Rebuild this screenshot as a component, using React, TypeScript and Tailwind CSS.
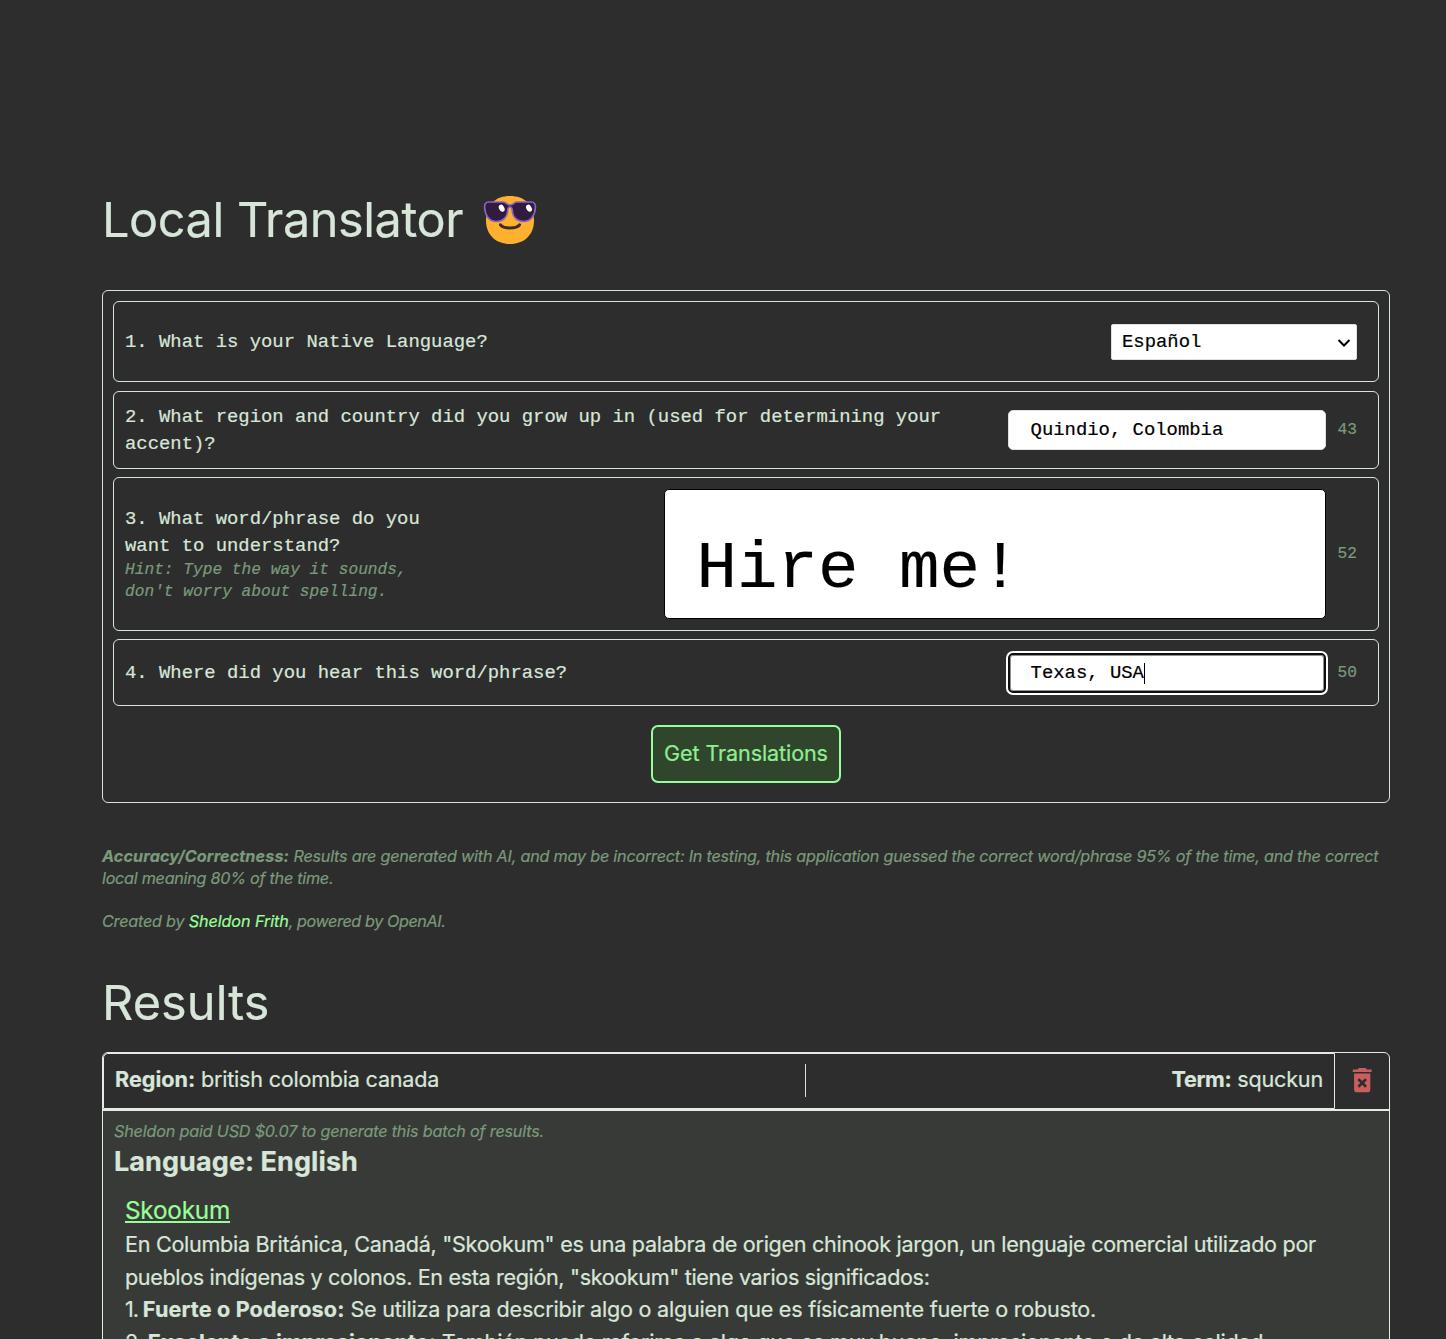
import type { ReactNode } from 'react';
import { MdDeleteForever } from 'react-icons/md';

function SunglassesFace() {
  return (
    <svg width="54" height="50" viewBox="0 0 54 50" className="block" aria-hidden="true">
      <path d="M27 1C41 1 51 9 51 25.500C51 40 41 49 27 49C13 49 3 40 3 25.500C3 9 13 1 27 1Z" fill="#ffb02e" />
      <path d="M17.500 29.800C20.500 34 33.500 34 36.500 29.800" fill="none" stroke="#402a32" strokeWidth="3" strokeLinecap="round" />
      <path
        d="M6 7H20.500C22.500 7 23.500 10 27 10C30.500 10 31.500 7 33.500 7H48C51.500 7 52.500 9 52.400 12.500C52 20 48 26.500 41 26.500C34.500 26.500 29.500 22.500 29.200 15C29.100 13 28.500 12 27 12C25.500 12 24.900 13 24.800 15C24.500 22.500 19.500 26.500 13 26.500C6 26.500 2 20 1.600 12.500C1.500 9 2.500 7 6 7Z"
        fill="#321b41"
        stroke="#8c63bd"
        strokeWidth="1.700"
      />
      <ellipse cx="18.700" cy="13.200" rx="2.600" ry="3.700" fill="#fff" transform="rotate(-30 18.700 13.200)" />
      <ellipse cx="46" cy="13.200" rx="2.600" ry="3.700" fill="#fff" transform="rotate(-30 46 13.200)" />
    </svg>
  );
}

function Row({ className, children }: { className: string; children: ReactNode }) {
  return (
    <div className={`flex items-center justify-between rounded-[6px] border border-[#d8e6d9] pl-[11px] pr-[21px] ${className}`}>
      {children}
    </div>
  );
}

function Count({ children }: { children: ReactNode }) {
  return <span className="ml-3 text-[16.2px] leading-[22px] text-[#7a9a7b]">{children}</span>;
}

export default function App() {
  return (
    <div className="h-[1339px] overflow-hidden bg-[#2d2d2d] pl-[102px] pr-[56px] font-['Inter',sans-serif] text-[21.6px] leading-[32.4px] text-[#d8e6d9] [-webkit-text-stroke:0.2px]">
      <header className="flex h-[290px] items-start pt-[191px]">
        <h1 className="whitespace-pre text-[48.6px] leading-[58px] tracking-[-0.44px]">Local Translator</h1>
        <div className="ml-[20px] mt-[4px]">
          <SunglassesFace />
        </div>
      </header>

      <form className="flex h-[513px] flex-col rounded-[6px] border border-[#d8e6d9] p-[10px] font-['Liberation_Mono',monospace] text-[18.9px] leading-[27px]">
        <Row className="h-[81px]">
          <label className="pt-[2px]">1. What is your Native Language?</label>
          <div className="flex h-[36px] w-[246px] items-center justify-between rounded-[2px] border border-[#d8e6d9] bg-white pl-[10px] pr-[5px] text-black">
            <span className="pt-[2px]">Español</span>
            <svg width="14" height="10" viewBox="0 0 14 10" className="mt-[2px]">
              <path d="M1.500 2L7 7.500L12.500 2" fill="none" stroke="#000" strokeWidth="2" />
            </svg>
          </div>
        </Row>
        <Row className="mt-[9px] h-[78px]">
          <label className="pt-[2px]">
            2. What region and country did you grow up in (used for determining your
            <br />
            accent)?
          </label>
          <div className="flex items-center">
            <div className="flex h-[40px] w-[318px] items-center rounded-[5px] border border-[#d8e6d9] bg-white pl-[22px] text-black">
              Quindio, Colombia
            </div>
            <Count>43</Count>
          </div>
        </Row>
        <Row className="mt-[8px] h-[154px]">
          <div className="pt-[1px]">
            <label className="block">
              3. What word/phrase do you
              <br />
              want to understand?
            </label>
            <p className="text-[16.2px] leading-[21.6px] text-[#7a9a7b] italic">
              Hint: Type the way it sounds,
              <br />
              don't worry about spelling.
            </p>
          </div>
          <div className="flex items-center">
            <div className="flex h-[130px] w-[662px] items-center rounded-[5px] border border-black bg-white pt-[29px] pl-[32px] text-[67.5px] leading-[80px] text-black">
              Hire me!
            </div>
            <Count>52</Count>
          </div>
        </Row>
        <Row className="mt-[8px] h-[67px]">
          <label className="pt-[2px]">4. Where did you hear this word/phrase?</label>
          <div className="flex items-center">
            <div className="flex h-[40px] w-[318px] items-center rounded-[5px] border-2 border-[#101010] bg-white pt-[1px] pl-[21px] text-black outline-[2px] outline-white ring-1 ring-[#8a948a] ring-inset">
              Texas, USA
              <span className="h-[21px] w-px bg-black" />
            </div>
            <Count>50</Count>
          </div>
        </Row>
        <button
          type="button"
          className="mt-[19px] h-[58px] w-[190px] self-center rounded-[7px] border-2 border-[#98ff98] bg-[#2f462d] pb-[2px] font-['Inter',sans-serif] text-[21.6px] tracking-[-0.12px] whitespace-nowrap text-[#90ee90]"
        >
          Get Translations
        </button>
      </form>

      <section className="mt-[43px] text-[16.2px] leading-[21.6px] tracking-[-0.22px] whitespace-nowrap text-[#7a9a7b] italic">
        <p>
          <strong className="tracking-[0.12px]">Accuracy/Correctness:</strong> Results are generated with AI, and may be
          incorrect: In testing, this application guessed the correct word/phrase 95% of the time, and the correct
          <br />
          <span className="tracking-[-0.27px]">local meaning 80% of the time.</span>
        </p>
        <p className="mt-[21.6px]">
          Created by <a className="tracking-[-0.09px] text-[#98ff98]">Sheldon Frith</a>
          <span className="tracking-[-0.42px]">, powered by OpenAI.</span>
        </p>
      </section>

      <h2 className="mt-[42px] h-[78px] text-[48.6px] leading-[58px] tracking-[0.1px]">Results</h2>

      <article className="h-[400px] rounded-t-[6px] border border-[#e3ebe3]">
        <div className="flex h-[56px]">
          <div className="flex w-[1232px] justify-between rounded-tl-[5px] border border-[#e3ebe3] px-[11px] leading-[31px] whitespace-nowrap">
            <div className="mt-[10px] h-[33px] w-[691px] border-r border-[#d8e6d9] tracking-[-0.23px]">
              <strong className="tracking-normal">Region:</strong> british colombia canada
            </div>
            <div className="mt-[10px] tracking-[-0.2px]">
              <strong className="tracking-[-0.3px]">Term:</strong> squckun
            </div>
          </div>
          <div className="flex w-[54px] items-center justify-center">
            <MdDeleteForever className="mb-[2px] size-[32.4px] text-[#c95d5f]" />
          </div>
        </div>
        <div className="h-[343px] border-t-2 border-[#e3ebe3] bg-[#383a37] pt-[10px] pl-[11px] whitespace-nowrap">
          <p className="text-[16.2px] leading-[21.6px] tracking-[-0.185px] text-[#7a9a7b] italic">
            Sheldon paid USD $0.07 to generate this batch of results.
          </p>
          <h3 className="text-[27px] leading-[38px] font-bold tracking-[0.077px]">Language: English</h3>
          <div className="mt-[11px] pl-[11px]">
            <a className="block text-[24.3px] leading-[36.4px] tracking-[-0.214px] text-[#98ff98] underline">Skookum</a>
            <p className="tracking-[-0.3px]">
              En Columbia Británica, Canadá, "Skookum" es una palabra de origen chinook jargon, un lenguaje comercial utilizado por
            </p>
            <p className="tracking-[-0.36px]">
              pueblos indígenas y colonos. En esta región, "skookum" tiene varios significados:
            </p>
            <p className="tracking-[-0.24px]">
              <span className="tracking-[-1.1px]">1. </span>
              <strong className="tracking-[0.15px]">Fuerte o Poderoso:</strong> Se utiliza para describir algo o alguien que es físicamente fuerte o robusto.
            </p>
            <p className="tracking-[-0.27px]">
              <span className="tracking-[-0.9px]">2. </span>
              <strong className="tracking-[0.1px]">Excelente o impresionante:</strong> También puede referirse a algo que es muy bueno, impresionante o de alta calidad.
            </p>
          </div>
        </div>
      </article>
    </div>
  );
}
